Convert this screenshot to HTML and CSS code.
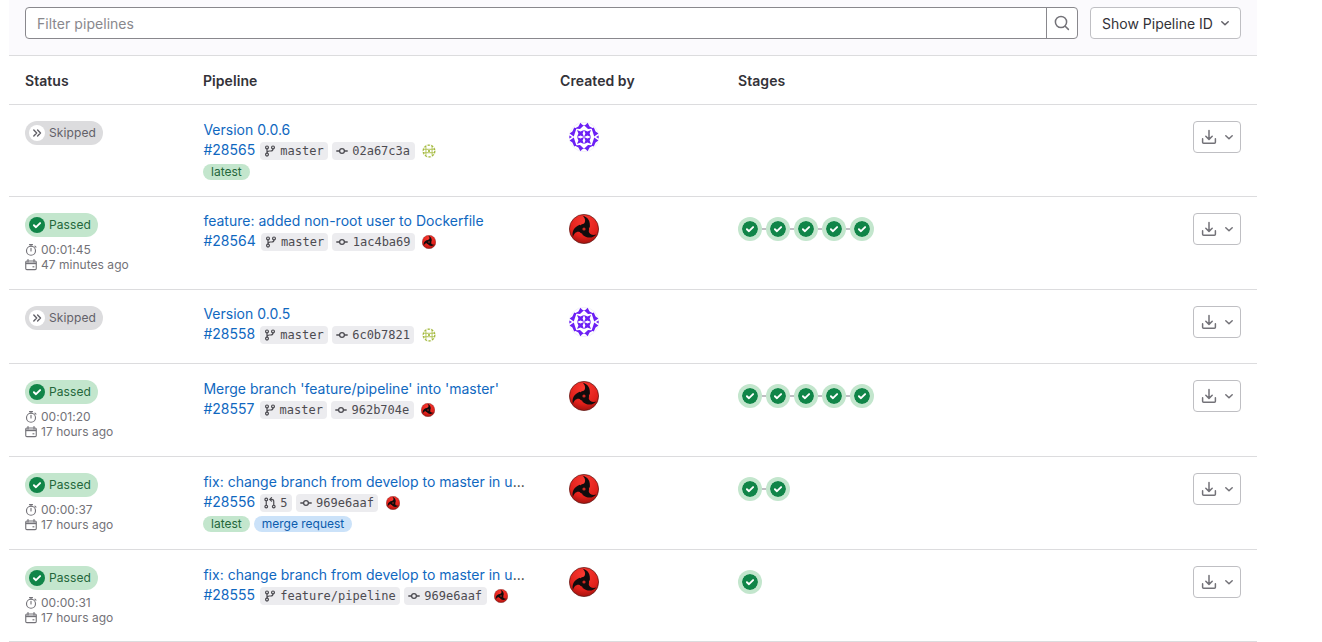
FILE: index.html
```html
<!DOCTYPE html>
<html lang="en">
<head>
<meta charset="utf-8">
<title>Pipelines</title>
<link rel="stylesheet" href="styles.css">
</head>
<body>
<svg class="sprite" aria-hidden="true">
  <defs>
    <radialGradient id="red" cx="50%" cy="25%" r="80%"><stop offset="0" stop-color="#fb3a32"/><stop offset=".65" stop-color="#e0201a"/><stop offset="1" stop-color="#96100c"/></radialGradient>
    <symbol id="search" viewBox="0 0 16 16"><g fill="none" stroke="currentColor" stroke-width="1.5" stroke-linecap="round"><circle cx="7" cy="7" r="5.6"/><path d="M11.2 11.2 14.4 14.4"/></g></symbol>
    <symbol id="chevron" viewBox="0 0 12 12"><path d="M2.8 4.8 6 7.8 9.2 4.8" fill="none" stroke="currentColor" stroke-width="1.5" stroke-linecap="round" stroke-linejoin="round"/></symbol>
    <symbol id="download" viewBox="0 0 16 16"><path d="M8 1.5V10M4.8 7.2 8 10.4 11.2 7.2M1.6 9.8V13.2Q1.6 14.2 2.6 14.2H13.4Q14.4 14.2 14.4 13.2V9.8" fill="none" stroke="currentColor" stroke-width="1.5" stroke-linecap="round" stroke-linejoin="round"/></symbol>
    <symbol id="branch" viewBox="0 0 16 16"><g fill="none" stroke="currentColor" stroke-width="1.6"><circle cx="4" cy="3.2" r="1.9"/><circle cx="12" cy="3.2" r="1.9"/><circle cx="4" cy="12.8" r="1.9"/><path d="M4 5V11M12 5Q12 8 9 8H7Q4 8 4 11"/></g></symbol>
    <symbol id="commit" viewBox="0 0 16 16"><g fill="none" stroke="currentColor" stroke-width="1.7" stroke-linecap="round"><circle cx="8" cy="8" r="3.2"/><path d="M1 8H4.6M11.4 8H15"/></g></symbol>
    <symbol id="merge" viewBox="0 0 16 16"><g fill="none" stroke="currentColor" stroke-width="1.6" stroke-linecap="round"><circle cx="3" cy="3.2" r="1.8"/><circle cx="3" cy="12.8" r="1.8"/><circle cx="13" cy="12.8" r="1.8"/><path d="M3 5V11M13 11V6Q13 3.2 10.5 3.2H8M10 .9 7.7 3.2 10 5.5"/></g></symbol>
    <symbol id="timer" viewBox="0 0 16 16"><g fill="none" stroke="currentColor" stroke-width="1.5" stroke-linecap="round"><circle cx="8" cy="9" r="6"/><path d="M6 .9H10M8 1V3M8 5.8V9.2M13.2 2.7 14.6 4.1"/></g></symbol>
    <symbol id="calendar" viewBox="0 0 16 16"><g fill="none" stroke="currentColor" stroke-width="1.5"><path d="M4 .7V4M12 .7V4" stroke-linecap="round"/><rect x="1" y="2.6" width="14" height="11.6" rx="1.5"/><path d="M1 5.8H15" stroke-width="2.2"/><path d="M10 10.4H12.5"/></g></symbol>
    <symbol id="passed" viewBox="0 0 16 16"><circle cx="8" cy="8" r="8" fill="#108548"/><path d="M4.9 8.2 7 10.2 11.1 6.1" fill="none" stroke="#fff" stroke-width="1.9" stroke-linecap="round" stroke-linejoin="round"/></symbol>
    <symbol id="skipped" viewBox="0 0 16 16"><circle cx="8" cy="8" r="8" fill="#fff"/><path d="M4.8 5 7.7 8 4.8 11M8.6 5 11.5 8 8.6 11" fill="none" stroke="#626168" stroke-width="1.4" stroke-linecap="round" stroke-linejoin="round"/></symbol>
    <g id="blade"><path d="M13.5 1.4C19 3 21.6 7 20.8 13.5L11.5 15.5C10 12 11.5 10.8 14.6 9.8 17 8 16.5 4 13.5 1.4Z"/></g>
    <symbol id="pinwheel" viewBox="0 0 30 30"><circle cx="15" cy="15" r="14.6" fill="url(#red)" stroke="#5a1512" stroke-width=".7"/><g fill="#120c0d"><use href="#blade"/><use href="#blade" transform="rotate(120 15 15)"/><use href="#blade" transform="rotate(240 15 15)"/><circle cx="15" cy="15" r="4.8"/></g><circle cx="15" cy="15" r="1.6" fill="#cf2a22"/></symbol>
    <g id="ident-quarter"><path d="M8 8 11.5 9.4 15 8 13.6 11.5 15 15 11.5 13.6 8 15 9.4 11.5Z"/><path d="M15 3.2 11 7 5.6 6.4 9.4 4.6 11.4 .8 13.2 2.8ZM5.2 5.4 7.4 6.6 4.8 14.6 .6 11.6 3.4 9.6Z"/><path d="M.4 13.4 3 15H.3Z"/></g>
    <symbol id="identicon" viewBox="0 0 30 30"><circle cx="15" cy="15" r="14.7" fill="#fff" stroke="#e9e5f7" stroke-width=".6"/><g fill="currentColor"><use href="#ident-quarter"/><use href="#ident-quarter" transform="matrix(-1 0 0 1 30 0)"/><use href="#ident-quarter" transform="matrix(1 0 0 -1 0 30)"/><use href="#ident-quarter" transform="rotate(180 15 15)"/></g></symbol>
    <symbol id="lime" viewBox="0 0 16 16"><circle cx="8" cy="8" r="7.4" fill="#fff" stroke="#e6eccb" stroke-width=".6"/><g fill="none" stroke="#a3b93c"><circle cx="8" cy="8" r="6.6" stroke-width="1.4" stroke-dasharray="2.6 1.5"/><path d="M4.5 3.5V12.5M11.5 3.5V12.5M2 6H14M2 10H14" stroke-width=".9"/><path d="M6.5 6.5 9.5 9.5M9.5 6.5 6.5 9.5" stroke-width="1"/></g></symbol>
  </defs>
</svg>
<main class="pipelines">
  <div class="filter-bar">
    <div class="search"><span class="search-input">Filter pipelines</span><span class="search-button"><svg class="i16"><use href="#search"/></svg></span></div>
    <div class="select"><span>Show Pipeline ID</span><svg class="i12"><use href="#chevron"/></svg></div>
  </div>
  <div class="row head"><div>Status</div><div>Pipeline</div><div>Created by</div><div>Stages</div></div>

  <div class="row r1">
    <div><span class="badge skipped"><svg class="i16"><use href="#skipped"/></svg>Skipped</span></div>
    <div class="pipeline"><a class="title version">Version 0.0.6</a>
      <div class="meta"><a class="id">#28565</a><span class="chip"><svg class="i12"><use href="#branch"/></svg>master</span><span class="chip sha"><svg class="i12"><use href="#commit"/></svg>02a67c3a</span><svg class="mini"><use href="#lime"/></svg></div>
      <div class="tags"><span class="tag">latest</span></div></div>
    <div class="creator"><svg class="avatar purple"><use href="#identicon"/></svg></div>
    <div class="stages"></div>
    <div class="actions"><span class="button"><svg class="i16"><use href="#download"/></svg><svg class="i12"><use href="#chevron"/></svg></span></div>
  </div>

  <div class="row r2">
    <div><span class="badge"><svg class="i16"><use href="#passed"/></svg>Passed</span><div class="time"><svg class="i12"><use href="#timer"/></svg>00:01:45</div><div class="time"><svg class="i12"><use href="#calendar"/></svg>47 minutes ago</div></div>
    <div class="pipeline"><a class="title">feature: added non-root user to Dockerfile</a>
      <div class="meta"><a class="id">#28564</a><span class="chip"><svg class="i12"><use href="#branch"/></svg>master</span><span class="chip sha"><svg class="i12"><use href="#commit"/></svg>1ac4ba69</span><svg class="mini"><use href="#pinwheel"/></svg></div></div>
    <div class="creator"><svg class="avatar"><use href="#pinwheel"/></svg></div>
    <div class="stages"><svg class="stage"><use href="#passed"/></svg><i class="link"></i><svg class="stage"><use href="#passed"/></svg><i class="link"></i><svg class="stage"><use href="#passed"/></svg><i class="link"></i><svg class="stage"><use href="#passed"/></svg><i class="link"></i><svg class="stage"><use href="#passed"/></svg></div>
    <div class="actions"><span class="button"><svg class="i16"><use href="#download"/></svg><svg class="i12"><use href="#chevron"/></svg></span></div>
  </div>

  <div class="row r3">
    <div><span class="badge skipped"><svg class="i16"><use href="#skipped"/></svg>Skipped</span></div>
    <div class="pipeline"><a class="title version">Version 0.0.5</a>
      <div class="meta"><a class="id">#28558</a><span class="chip"><svg class="i12"><use href="#branch"/></svg>master</span><span class="chip sha"><svg class="i12"><use href="#commit"/></svg>6c0b7821</span><svg class="mini"><use href="#lime"/></svg></div></div>
    <div class="creator"><svg class="avatar purple"><use href="#identicon"/></svg></div>
    <div class="stages"></div>
    <div class="actions"><span class="button"><svg class="i16"><use href="#download"/></svg><svg class="i12"><use href="#chevron"/></svg></span></div>
  </div>

  <div class="row r4">
    <div><span class="badge"><svg class="i16"><use href="#passed"/></svg>Passed</span><div class="time"><svg class="i12"><use href="#timer"/></svg>00:01:20</div><div class="time"><svg class="i12"><use href="#calendar"/></svg>17 hours ago</div></div>
    <div class="pipeline"><a class="title">Merge branch 'feature/pipeline' into 'master'</a>
      <div class="meta"><a class="id">#28557</a><span class="chip"><svg class="i12"><use href="#branch"/></svg>master</span><span class="chip sha"><svg class="i12"><use href="#commit"/></svg>962b704e</span><svg class="mini"><use href="#pinwheel"/></svg></div></div>
    <div class="creator"><svg class="avatar"><use href="#pinwheel"/></svg></div>
    <div class="stages"><svg class="stage"><use href="#passed"/></svg><i class="link"></i><svg class="stage"><use href="#passed"/></svg><i class="link"></i><svg class="stage"><use href="#passed"/></svg><i class="link"></i><svg class="stage"><use href="#passed"/></svg><i class="link"></i><svg class="stage"><use href="#passed"/></svg></div>
    <div class="actions"><span class="button"><svg class="i16"><use href="#download"/></svg><svg class="i12"><use href="#chevron"/></svg></span></div>
  </div>

  <div class="row r5">
    <div><span class="badge"><svg class="i16"><use href="#passed"/></svg>Passed</span><div class="time"><svg class="i12"><use href="#timer"/></svg>00:00:37</div><div class="time"><svg class="i12"><use href="#calendar"/></svg>17 hours ago</div></div>
    <div class="pipeline"><a class="title">fix: change branch from develop to master in u<span class="dots">...</span></a>
      <div class="meta"><a class="id">#28556</a><span class="chip mr"><svg class="i12"><use href="#merge"/></svg>5</span><span class="chip sha"><svg class="i12"><use href="#commit"/></svg>969e6aaf</span><svg class="mini"><use href="#pinwheel"/></svg></div>
      <div class="tags"><span class="tag">latest</span><span class="tag blue">merge request</span></div></div>
    <div class="creator"><svg class="avatar"><use href="#pinwheel"/></svg></div>
    <div class="stages"><svg class="stage"><use href="#passed"/></svg><i class="link"></i><svg class="stage"><use href="#passed"/></svg></div>
    <div class="actions"><span class="button"><svg class="i16"><use href="#download"/></svg><svg class="i12"><use href="#chevron"/></svg></span></div>
  </div>

  <div class="row r6">
    <div><span class="badge"><svg class="i16"><use href="#passed"/></svg>Passed</span><div class="time"><svg class="i12"><use href="#timer"/></svg>00:00:31</div><div class="time"><svg class="i12"><use href="#calendar"/></svg>17 hours ago</div></div>
    <div class="pipeline"><a class="title">fix: change branch from develop to master in u<span class="dots">...</span></a>
      <div class="meta"><a class="id">#28555</a><span class="chip"><svg class="i12"><use href="#branch"/></svg>feature/pipeline</span><span class="chip sha"><svg class="i12"><use href="#commit"/></svg>969e6aaf</span><svg class="mini"><use href="#pinwheel"/></svg></div></div>
    <div class="creator"><svg class="avatar"><use href="#pinwheel"/></svg></div>
    <div class="stages"><svg class="stage"><use href="#passed"/></svg></div>
    <div class="actions"><span class="button"><svg class="i16"><use href="#download"/></svg><svg class="i12"><use href="#chevron"/></svg></span></div>
  </div>
</main>
</body>
</html>
```
FILE: styles.css
```css
* { box-sizing: border-box; }
body { margin: 0; background: #fff; color: #333238; font: 14px/20px Inter, "Noto Sans", sans-serif; overflow: hidden; }
svg { display: block; flex: none; }
.sprite { position: absolute; width: 0; height: 0; }
.i16 { width: 16px; height: 16px; }
.i12 { width: 12px; height: 12px; }
.pipelines { width: 1248px; margin-left: 9px; }
.filter-bar { display: flex; gap: 12px; height: 56px; padding: 7px 16px 16px; background: #fbfafd; border-bottom: 1px solid #dcdcde; }
.search { flex: 1; height: 32px; display: flex; border: 1px solid #89888d; border-radius: 4px; background: #fff; color: #89888d; }
.search-input { flex: 1; padding: 6px 11px; line-height: 20px; letter-spacing: .04px; }
.search-button { width: 31px; border-left: 1px solid #89888d; display: flex; align-items: center; justify-content: center; color: #737278; }
.select { width: 151px; height: 32px; border: 1px solid #bfbfc3; border-radius: 4px; background: #fff; display: flex; align-items: center; justify-content: space-between; padding: 2px 9px 0 11px; }
.select svg { color: #626168; margin-top: -2px; }
.row { display: grid; grid-template-columns: 178px 357px 178px 1fr 80px; height: 93px; border-bottom: 1px solid #dcdcde; }
.row > div { padding: 16px 16px 0; }
.row.head { height: 49px; font-weight: 600; letter-spacing: .06px; }
.row.head > div { padding-top: 15px; }
.row.r1, .row.r6 { height: 92px; }
.row.r3 { height: 74px; }
.badge { display: inline-flex; align-items: center; gap: 4px; height: 24px; padding: 0 7px 0 4px; border-radius: 12px; background: #c3e6cd; color: #24663b; font-size: 12px; letter-spacing: .1px; vertical-align: top; }
.badge.skipped { background: #dcdcde; color: #626168; }
.time { display: flex; align-items: center; gap: 4px; height: 16px; font-size: 12px; letter-spacing: .03px; color: #737278; }
.badge + .time { margin-top: 4px; padding-top: 1px; }
.pipeline { white-space: nowrap; }
.row > .pipeline { padding-top: 15px; padding-left: 16.4px; padding-right: 0; }
.row.r2 > .pipeline, .row.r3 > .pipeline { padding-top: 14px; }
.title { display: block; height: 20px; color: #1068bf; letter-spacing: .01px; }
.dots { color: #333238; }
.meta { display: flex; align-items: center; height: 21px; }
.id { color: #1068bf; margin: -1px 5.2px 0 0; }
.chip { display: flex; align-items: center; gap: 4px; height: 18px; padding: 0 4px; margin-right: 4px; border-radius: 4px; background: #ececef; color: #4c4b51; font: 12px/18px "DejaVu Sans Mono", monospace; }
.chip.sha { padding-right: 4.5px; gap: 4.5px; }
.mini { width: 14px; height: 14px; margin-left: 3.4px; }
.tags { display: flex; gap: 4px; margin: 3px 0 0 -.4px; }
.tag { height: 16px; line-height: 16px; padding: 0 8px; border-radius: 8px; font-size: 12px; background: #c3e6cd; color: #24663b; }
.tag.blue { background: #cbe2f9; color: #0b5cad; }
.creator .avatar { width: 30px; height: 30px; margin: 1px 0 0 9px; }
.purple { color: #6c1ff5; }
.stages { display: flex; }
.row > .stages { padding-top: 20px; }
.stage { width: 24px; height: 24px; padding: 4px; border-radius: 12px; background: #c3e6cd; }
.link { width: 4px; height: 2px; margin-top: 11px; background: #bfbfc3; }
.actions { display: flex; justify-content: flex-end; }
.button { width: 48px; height: 32px; border: 1px solid #bfbfc3; border-radius: 4px; display: flex; align-items: center; justify-content: center; gap: 6px; padding-left: 2px; color: #737278; }
```
